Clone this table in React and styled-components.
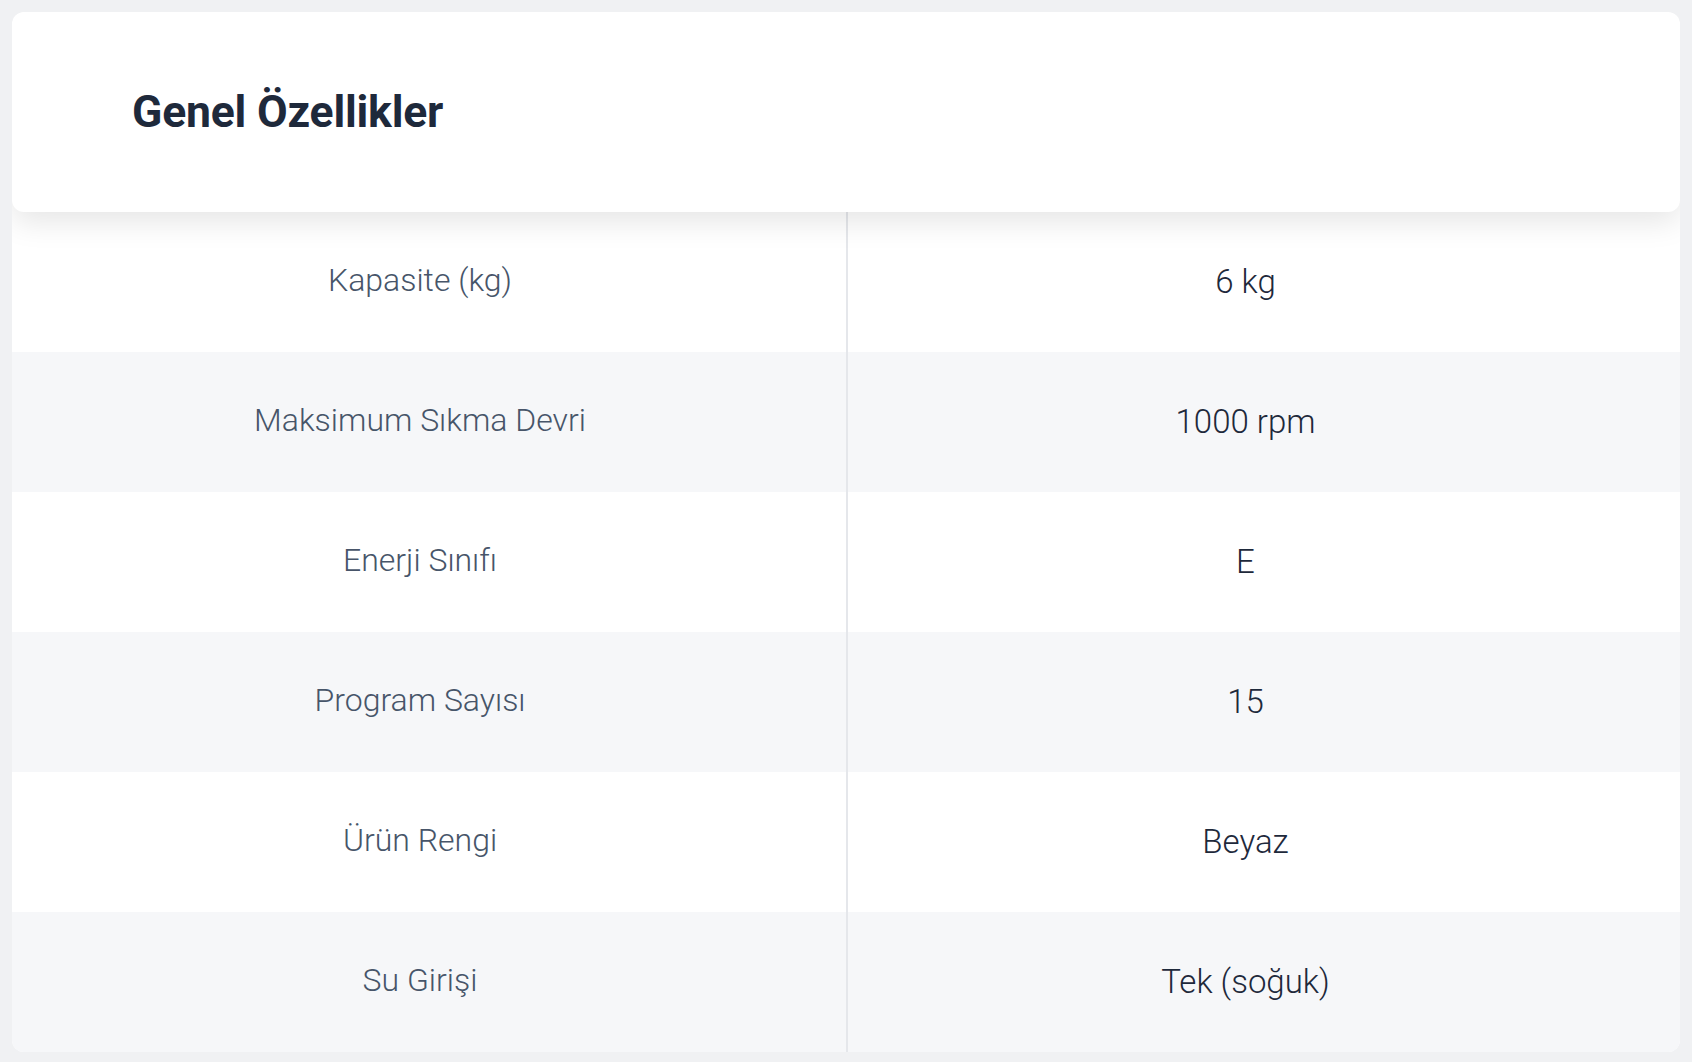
import React from "react";
import styled, { createGlobalStyle } from "styled-components";

const specs = [
   { label: "Kapasite (kg)", value: "6 kg" },
   { label: "Maksimum Sıkma Devri", value: "1000 rpm" },
   { label: "Enerji Sınıfı", value: "E" },
   { label: "Program Sayısı", value: "15" },
   { label: "Ürün Rengi", value: "Beyaz" },
   { label: "Su Girişi", value: "Tek (soğuk)" },
];

const Global = createGlobalStyle`
   html, body {
      margin: 0;
      background: #f0f1f3;
      font-family: Roboto, "Noto Sans", sans-serif;
   }
`;

export default function App() {
   return (
      <>
         <Global />
         <Page>
            <Card>
               <Header>
                  <Title>Genel Özellikler</Title>
               </Header>

               <Table>
                  {specs.map((s, i) => (
                     <Row key={s.label} $striped={i % 2 === 1}>
                        <Label>{s.label}</Label>
                        <Value>{s.value}</Value>
                     </Row>
                  ))}
               </Table>
            </Card>
         </Page>
      </>
   );
}

const Page = styled.div`
   padding: 12px 12px 10px 12px;
`;

const Card = styled.div`
   background: #ffffff;
   border-radius: 12px;
   overflow: hidden;
`;

const Header = styled.div`
   position: relative;
   z-index: 1;
   display: flex;
   align-items: center;
   height: 200px;
   padding: 0 120px;
   box-sizing: border-box;
   background: #ffffff;
   border-radius: 12px;
   box-shadow: 0 10px 30px rgba(0, 0, 0, 0.1);
`;

const Title = styled.h2`
   margin: 0;
   font-size: 44.5px;
   font-weight: 700;
   color: #1e293b;
   letter-spacing: -0.2px;
`;

const Table = styled.div`
   display: flex;
   flex-direction: column;
`;

const Row = styled.div`
   display: grid;
   grid-template-columns: 1fr 1fr;
   height: 140px;
   background: ${(p) => (p.$striped ? "#f6f7f9" : "#ffffff")};
`;

const Cell = styled.div`
   display: flex;
   align-items: center;
   justify-content: center;
   font-weight: 300;
`;

const Label = styled(Cell)`
   font-size: 32px;
   color: #475569;
   padding: 0 18px 4px 0;
`;

const Value = styled(Cell)`
   font-size: 33px;
   color: #1e293b;
   border-left: 2px solid #e5e7eb;
   padding: 0 37px 2px 0;
`;
